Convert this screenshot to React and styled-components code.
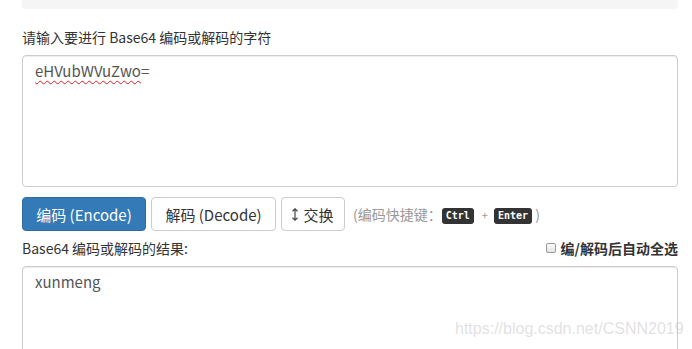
import React from 'react';
import styled, { createGlobalStyle } from 'styled-components';

const GlobalStyle = createGlobalStyle`
  html, body {
    margin: 0;
    padding: 0;
    background: #fff;
    overflow: hidden;
  }
  body {
    font-family: "Noto Sans CJK SC", "Liberation Sans", sans-serif;
    color: #333;
  }
`;

function App() {
  return (
    <>
      <GlobalStyle />
      <Page>
        <TopWell />
        <Label top="18px">请输入要进行 Base64 编码或解码的字符</Label>
        <Box height="132px">
          <Misspelled>eHVubWVuZwo</Misspelled>=
        </Box>

        <ButtonRow>
          <Button primary width="124px">编码 (Encode)</Button>
          <Button width="125px">解码 (Decode)</Button>
          <Button width="64px" gap="5px">
            <SortIcon width="6" height="13" viewBox="0 0 6 13">
              <path d="M3 1v11M0.5 3.2L3 0.8l2.5 2.4M0.5 9.8L3 12.2l2.5-2.4" fill="none" stroke="#444" strokeWidth="1.2" />
            </SortIcon>
            交换
          </Button>
          <Hint>
            (编码快捷键：<Kbd>Ctrl</Kbd>
            <Plus>+</Plus>
            <Kbd>Enter</Kbd> )
          </Hint>
        </ButtonRow>

        <ResultHead>
          <Label>Base64 编码或解码的结果:</Label>
          <AutoSelect>
            <Check />
            编/解码后自动全选
          </AutoSelect>
        </ResultHead>
        <Box height="120px">xunmeng</Box>
      </Page>
      <Watermark>https://blog.csdn.net/CSNN2019</Watermark>
    </>
  );
}

const Page = styled.div`
  display: flex;
  flex-direction: column;
  padding: 0 14px 0 22px;
`;

const TopWell = styled.div`
  height: 9px;
  background: #f5f5f5;
  border-radius: 0 0 4px 4px;
`;

const Label = styled.div`
  margin-top: ${(props) => props.top || '0'};
  font-size: 14px;
  line-height: 20px;
  color: #333;
`;

const Box = styled.div`
  margin-top: 8px;
  height: ${(props) => props.height};
  box-sizing: border-box;
  border: 1px solid #ccc;
  border-radius: 4px;
  padding: 5px 12px;
  font-size: 15px;
  line-height: 20px;
  color: #555;
  box-shadow: inset 0 1px 1px rgba(0, 0, 0, 0.075);
`;

const Misspelled = styled.span`
  text-decoration: underline wavy #e02020;
  text-decoration-thickness: 1px;
  text-underline-offset: 3px;
`;

const ButtonRow = styled.div`
  display: flex;
  align-items: center;
  margin-top: 10px;
  gap: 4px;
`;

const Button = styled.div`
  display: flex;
  align-items: center;
  justify-content: center;
  gap: ${(props) => props.gap || '0'};
  width: ${(props) => props.width};
  height: 34px;
  box-sizing: border-box;
  border: 1px solid ${(props) => (props.primary ? '#2e6da4' : '#ccc')};
  border-radius: 4px;
  background: ${(props) => (props.primary ? '#337ab7' : '#fff')};
  color: ${(props) => (props.primary ? '#fff' : '#333')};
  font-size: 15px;
  & + & {
    margin-left: 1px;
  }
`;

const SortIcon = styled.svg`
  display: block;
`;

const Hint = styled.div`
  margin-left: 4px;
  font-size: 14px;
  line-height: 20px;
  color: #999;
  white-space: nowrap;
`;

const Kbd = styled.span`
  display: inline-block;
  vertical-align: 1px;
  padding: 1px 4px;
  background: #333;
  color: #fff;
  border-radius: 3px;
  font-family: "DejaVu Sans Mono", "Liberation Mono", monospace;
  font-size: 10px;
  font-weight: bold;
  line-height: 14px;
`;

const Plus = styled.span`
  display: inline-block;
  margin: 0 6px 0 8px;
  font-size: 11px;
`;

const ResultHead = styled.div`
  display: flex;
  justify-content: space-between;
  align-items: center;
  margin-top: 7px;
`;

const AutoSelect = styled.div`
  display: flex;
  align-items: center;
  gap: 5px;
  font-size: 14px;
  font-weight: bold;
  color: #333;
`;

const Check = styled.span`
  width: 8px;
  height: 8px;
  border: 1px solid #999;
  border-radius: 2px;
  background: linear-gradient(#fafafa, #e4e4e4);
`;

const Watermark = styled.div`
  position: absolute;
  left: 455px;
  top: 320px;
  font-family: "Liberation Sans", Arial, sans-serif;
  font-size: 16px;
  color: rgba(200, 200, 200, 0.55);
  pointer-events: none;
`;

export default App;
